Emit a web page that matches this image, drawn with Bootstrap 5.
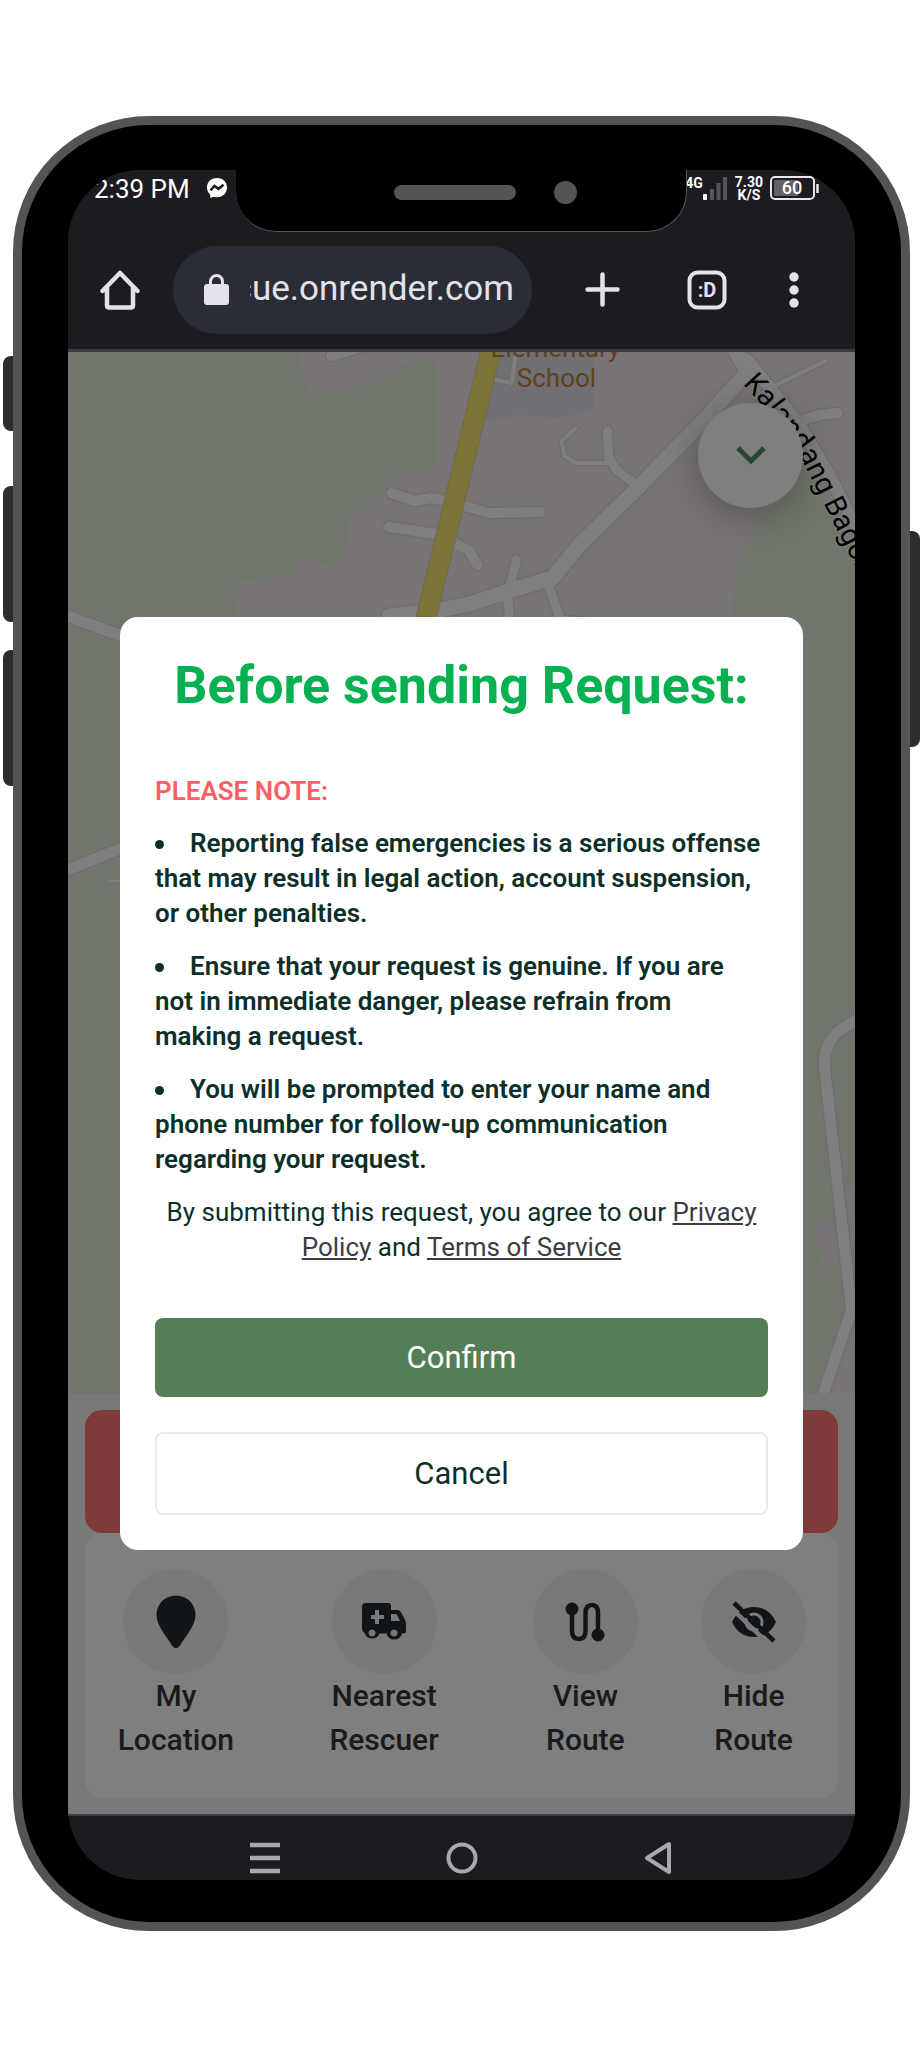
<!DOCTYPE html>
<html lang="en">
<head>
<meta charset="utf-8">
<meta name="viewport" content="width=device-width, initial-scale=1">
<title>Before sending Request</title>
<link href="https://cdn.jsdelivr.net/npm/bootstrap@5.3.0/dist/css/bootstrap.min.css" rel="stylesheet">
<style>
  body { font-family: Roboto, "Liberation Sans", sans-serif; background: #fff; }
  .stage { padding: 116px 11px 116px 13px; }
  .phone { background: #000; border: 9px solid #545454; border-radius: 136px; padding: 45px 46px 42px; }
  .side-key { width: 10px; background: #2d2d2d; left: -19px; border-radius: 8px 0 0 8px; }
  .key-mute { top: 231px; height: 75px; }
  .key-up { top: 361px; height: 136px; }
  .key-down { top: 525px; height: 136px; }
  .key-power { left: auto; right: -19px; top: 406px; height: 216px; border-radius: 0 8px 8px 0; }
  .screen { background: #1c1b20; border-radius: 72px; overflow: hidden; }
  .notch { top: 0; left: 50%; width: 451px; height: 62px; margin-left: -226px; background: #000; border-radius: 0 0 40px 40px; border: solid #55555a; border-width: 0 1px 1px 0; }
  .speaker { width: 122px; height: 15px; background: #545454; border-radius: 8px; margin-left: 158px; }
  .lens { width: 23px; height: 23px; background: #545454; border-radius: 50%; margin-left: 38px; }

  .status { height: 60px; padding: 6px 35px 0 26px; color: #fff; }
  .clock { font-size: 26px; line-height: 26px; }
  .net { font-size: 14px; line-height: 14px; font-weight: 700; }
  .rate { font-size: 14px; line-height: 13px; font-weight: 700; margin: 0 7px 0 8px; }
  .toolbar { height: 119px; padding: 0 56px 0 32px; color: #e3e2ea; }
  .tool { background: none; border: 0; padding: 0; color: inherit; line-height: 0; }
  .omnibox { background: #2b2d36; height: 88px; margin: 0 53px 0 33px; padding: 0 18px 0 31px; flex: 1 1 0; min-width: 0; }
  .omnibox input { background: none; border: 0; outline: 0; color: #e3e2ea; font-size: 35px; padding: 0; width: 0; min-width: 0; flex: 1 1 0; direction: rtl; margin-left: 21px; }
  .tab-gap { margin: 0 62px 0 67px; }

  .site { border-top: 3px solid #3c3b44; border-bottom: 2px solid #3c3b4c; }
  .map { display: block; width: 100%; height: 1041px; }
  .map .case { stroke: #e0dadd; }
  .map .road { stroke: #fefefe; }
  .toggle { top: 51px; right: 52px; width: 105px; height: 105px; background: #fff; box-shadow: 0 6px 40px rgba(0,0,0,.3); }
  .dock { background: #f2f2f2; padding: 17px 17px 16px; }
  .sos { display: block; height: 123px; background: #fe7676; border: 0; border-radius: 17px; }
  .actions { display: grid; grid-template-columns: 182fr 235fr 168fr 169fr; background: #fff; border-radius: 17px; padding: 36px 0; }
  .action { background: none; border: 0; padding: 0; font-size: 30px; line-height: 44px; font-weight: 500; color: #363636; }
  .disc { width: 105px; height: 105px; background: #f3f3f3; color: #242a30; }

  .dim { background: rgba(0,0,0,.5); padding: 0 52px; }
  .sheet { background: #fff; border-radius: 18px; padding: 35px; color: #0c3029; font-size: 26px; line-height: 35px; }
  .sheet h1 { font-size: 52px; line-height: 68px; font-weight: 700; color: #05b150; margin-bottom: 54px; }
  .note { color: #fb5f63; font-weight: 600; margin-bottom: 17px; }
  .rules li { font-weight: 600; margin-bottom: 18px; padding-right: 5px; }
  .rules li::before { content: ""; display: inline-block; width: 9px; height: 9px; border-radius: 50%; background: currentColor; margin-right: 26px; vertical-align: 3px; }
  .terms { margin-bottom: 53px; }
  .terms a { color: #3c3c3f; }
  .choice { font-size: 31px; border-radius: 8px; padding: 0; line-height: 39px; }
  .choice-ok { background: #557e57; color: #fff; border: 0; height: 79px; margin-bottom: 35px; }
  .choice-no { background: #fff; color: #0c3029; border: 2px solid #e9e9e9; height: 83px; }
  .navkeys { height: 64px; padding-top: 25px; color: #a9a8ad; }
</style>
</head>
<body>
<main class="stage">
  <div class="phone position-relative">
    <span class="side-key key-mute position-absolute"></span>
    <span class="side-key key-up position-absolute"></span>
    <span class="side-key key-down position-absolute"></span>
    <span class="side-key key-power position-absolute"></span>

    <div class="screen position-relative">
      <div class="status d-flex align-items-start">
        <span class="clock">2:39 PM</span>
        <svg class="ms-3" width="22" height="24" viewBox="0 0 22 24" aria-hidden="true"><path d="M11 2C5 2 1 6 1 11.600c0 3 1.300 5.400 3.300 7.100V22l3-1.300c1.200.4 2.400.6 3.700.6 6 0 10-4.300 10-9.700S17 2 11 2z" fill="#fff"/><path d="M4.500 14.500l4-4.500 4 2.800 5-4" fill="none" stroke="#1c1b20" stroke-width="2.600"/></svg>
        <div class="d-flex ms-auto">
          <span class="net">4G</span>
          <svg width="24" height="25" viewBox="0 0 24 25" aria-hidden="true"><rect y="18" width="4" height="6" rx="1" fill="#fff"/><path d="M9 24V13M15.500 24V7M22 24V1" stroke="#55545a" stroke-width="4"/></svg>
          <span class="rate text-center">7.30<br>K/S</span>
          <svg width="50" height="25" viewBox="0 0 50 25"><rect x="1" y="1" width="43" height="22" rx="4" fill="none" stroke="#e8e8ea" stroke-width="2"/><path d="M4 4h24v16H4z" fill="#626166"/><path d="M47.500 8v9" stroke="#e8e8ea" stroke-width="2.500"/><text x="22" y="18" text-anchor="middle" font-size="18" font-weight="500" fill="#fff">60</text></svg>
        </div>
      </div>

      <div class="notch position-absolute d-flex align-items-center">
        <span class="speaker mb-3"></span><span class="lens mb-3"></span>
      </div>

      <div class="toolbar d-flex align-items-center">
        <button class="tool" aria-label="Home"><svg width="40" height="42" viewBox="0 0 40 42" fill="none" stroke="currentColor" stroke-width="4.500" stroke-linejoin="round" stroke-linecap="round"><path d="M2.500 22L20 4l17.500 18M7 18v18.500q0 2 2 2h22q2 0 2-2V18"/></svg></button>
        <div class="omnibox d-flex align-items-center rounded-pill">
          <svg class="flex-shrink-0" width="25" height="32" viewBox="0 0 25 32" aria-hidden="true"><rect y="10" width="25" height="21" rx="3" fill="currentColor"/><path d="M6.500 12V7.500a6 6 0 0 1 12 0V12" fill="none" stroke="currentColor" stroke-width="3"/></svg>
          <input type="text" aria-label="Address" value="rescue.onrender.com">
        </div>
        <button class="tool" aria-label="New tab"><svg width="35" height="35" viewBox="0 0 35 35" stroke="currentColor" stroke-width="4.500" stroke-linecap="round"><path d="M17.500 2.500v30M2.500 17.500h30"/></svg></button>
        <button class="tool tab-gap" aria-label="Tabs"><svg width="40" height="40" viewBox="0 0 40 40"><rect x="2.500" y="2.500" width="35" height="35" rx="8" fill="none" stroke="currentColor" stroke-width="4"/><text x="20" y="27" text-anchor="middle" font-size="20" font-weight="700" fill="currentColor">:D</text></svg></button>
        <button class="tool" aria-label="Menu"><svg width="10" height="36" viewBox="0 0 10 36" fill="currentColor"><circle cx="5" cy="5" r="4.700"/><circle cx="5" cy="18" r="4.700"/><circle cx="5" cy="31" r="4.700"/></svg></button>
      </div>

      <div class="site position-relative">
        <svg class="map" viewBox="68 352 788 1041" preserveAspectRatio="xMidYMin slice" fill="none" stroke-linecap="round" stroke-linejoin="round">
          <path fill="#e1ecd9" d="M0 300h1000v1200H0z"/>
          <path fill="#f0e8ea" d="M298 340l5 35 6 17h34l50-18 6-10 38-6v112l-38 3-22 28-27 18-5 42-15 5-28-9-15 20-47 3-6 60h494l10-75 22-45 34-32 12-24 50 95V340z"/>
          <path fill="#f0e8ea" d="M819 1215l14 8 6 40-16 10-6-30zM842 1190l20-10v100z M850 1310l-25 90h40v-110z"/>
          <path fill="#dde0e8" d="M495 340h99v70l-34 8-40-3-40 8z"/>
          <g class="case">
            <path d="M332 356l40-12M392 493l23 8 17-3 15 3 43 12 51-1M389 527l48 7 32 16 9 15M800 421l20-6 18-2" stroke-width="13"/>
            <path d="M727 335l21 37-48 53-64 65-56 55-27 33-41 12-42 14-40 8-40 4" stroke-width="18"/>
            <path d="M748 360l52 65 30 50 40 80" stroke-width="15"/>
            <path d="M517 560l-9 35 3 35M549 585l12 35 32 3M608 431l1 26 8 13 20 15" stroke-width="12"/>
            <path d="M576 428l-14 13 3 15 11 7h32M770 388l56-27M516 357l-4 26-15-3" stroke-width="7"/>
            <path d="M60 613l70 26M60 873l70-28M870 1011l-32 21q-14 13-13 36l27 242-32 95" stroke-width="14"/>
            <path d="M109 881h30" stroke-width="6"/>
          </g>
          <g class="road">
            <path d="M332 356l40-12M392 493l23 8 17-3 15 3 43 12 51-1M389 527l48 7 32 16 9 15M800 421l20-6 18-2" stroke-width="10"/>
            <path d="M727 335l21 37-48 53-64 65-56 55-27 33-41 12-42 14-40 8-40 4" stroke-width="15"/>
            <path d="M748 360l52 65 30 50 40 80" stroke-width="12"/>
            <path d="M517 560l-9 35 3 35M549 585l12 35 32 3M608 431l1 26 8 13 20 15" stroke-width="9"/>
            <path d="M576 428l-14 13 3 15 11 7h32M770 388l56-27M516 357l-4 26-15-3" stroke-width="4"/>
            <path d="M60 613l70 26M60 873l70-28M870 1011l-32 21q-14 13-13 36l27 242-32 95" stroke-width="11"/>
            <path d="M109 881h30" stroke-width="3"/>
          </g>
          <path d="M494 340l-72 297" stroke="#d8cf9c" stroke-width="21"/>
          <path d="M494 340l-72 297" stroke="#fde66c" stroke-width="19"/>
          <g fill="#c4823c" font-size="26" text-anchor="middle"><text x="556" y="357">Elementary</text><text x="557" y="387">School</text></g>
          <path id="street" d="M743 384L768 411L796 447L866 587"/>
          <text fill="#000" font-size="29" stroke="#fff" stroke-width="2" paint-order="stroke"><textPath href="#street">Kalandang Bagong</textPath></text>
        </svg>
        <button class="toggle btn position-absolute rounded-circle p-0" aria-label="Collapse"><svg width="30" height="20" viewBox="0 0 30 20" fill="none" stroke="#54905f" stroke-width="5"><path d="M2 2l13 13L28 2"/></svg></button>

        <div class="dock">
          <button class="sos w-100" aria-label="Send request"></button>
          <div class="actions">
            <button class="action d-flex flex-column align-items-center"><span class="disc rounded-circle d-flex align-items-center justify-content-center"><svg width="40" height="54" viewBox="0 0 40 54" fill="currentColor"><path d="M20 .5C9 .5.500 8.800.500 20 .5 30 10 41 16.500 51q3.500 4.500 7 0C30 41 39.500 30 39.500 20 39.500 8.800 31 .5 20 .5z"/></svg></span>My<br>Location</button>
            <button class="action d-flex flex-column align-items-center"><span class="disc rounded-circle d-flex align-items-center justify-content-center"><svg width="44" height="38" viewBox="0 0 44 38"><path fill="currentColor" fill-rule="evenodd" d="M4 0h22q3 0 3 3v4h6q3 0 4.500 3l4 8q.5 1 .5 3v7q0 2.500-2.500 2.500H40a8 8 0 0 1-15.500 0h-7a8 8 0 0 1-15-.5Q0 28 0 26V4q0-4 4-4zM13 7v5H9v4h4v5h4v-5h5v-4h-5V7zM29 11v7h9l-3-6q-.5-1-2-1zM10 26.500a3.500 3.500 0 1 0 .1 0zM32 26.500a3.500 3.500 0 1 0 .1 0z"/></svg></span>Nearest<br>Rescuer</button>
            <button class="action d-flex flex-column align-items-center"><span class="disc rounded-circle d-flex align-items-center justify-content-center"><svg width="40" height="40" viewBox="0 0 40 40"><path d="M7 7v22q0 8 7 8 6.500 0 6.500-8V11q0-8 6.500-8 6 0 6 8v22" fill="none" stroke="currentColor" stroke-width="4.500"/><circle cx="7" cy="7" r="6.500" fill="currentColor"/><circle cx="33" cy="33" r="6.500" fill="currentColor"/></svg></span>View<br>Route</button>
            <button class="action d-flex flex-column align-items-center"><span class="disc rounded-circle d-flex align-items-center justify-content-center"><svg width="44" height="42" viewBox="0 0 44 42"><path d="M0 21Q7 6 22 6t22 15q-7 15-22 15T0 21z" fill="currentColor"/><circle cx="22" cy="21" r="8" fill="none" stroke="#f3f3f3" stroke-width="3"/><circle cx="23" cy="21" r="4" fill="currentColor"/><path d="M-3 5l41 39" stroke="#f3f3f3" stroke-width="4.500"/><path d="M2 2l40 38" stroke="currentColor" stroke-width="4.500"/></svg></span>Hide<br>Route</button>
          </div>
        </div>

        <div class="dim position-absolute top-0 start-0 w-100 h-100 d-flex align-items-center">
          <section class="sheet w-100" role="dialog" aria-labelledby="ask">
            <h1 id="ask" class="text-center">Before sending Request:</h1>
            <p class="note">PLEASE NOTE:</p>
            <ul class="rules list-unstyled mb-0">
              <li>Reporting false emergencies is a serious offense that may result in legal action, account suspension, or other penalties.</li>
              <li>Ensure that your request is genuine. If you are not in immediate danger, please refrain from making a request.</li>
              <li>You will be prompted to enter your name and phone number for follow-up communication regarding your request.</li>
            </ul>
            <p class="terms text-center">By submitting this request, you agree to our <a href="#">Privacy Policy</a> and <a href="#">Terms of Service</a></p>
            <button class="choice choice-ok btn d-block w-100">Confirm</button>
            <button class="choice choice-no btn d-block w-100">Cancel</button>
          </section>
        </div>
      </div>

      <div class="navkeys row justify-content-center gx-0 text-center">
        <div class="col-3"><button class="tool" aria-label="Recent apps"><svg width="30" height="34" viewBox="0 0 30 34" stroke="currentColor" stroke-width="4.500"><path d="M0 4h30M0 17h30M0 30h30"/></svg></button></div>
        <div class="col-3"><button class="tool" aria-label="Home screen"><svg width="32" height="34" viewBox="0 0 32 34" fill="none" stroke="currentColor" stroke-width="4"><circle cx="16" cy="17" r="13.500"/></svg></button></div>
        <div class="col-3"><button class="tool" aria-label="Back"><svg width="28" height="34" viewBox="0 0 28 34" fill="none" stroke="currentColor" stroke-width="4" stroke-linejoin="round"><path d="M25 3v28L3 17z"/></svg></button></div>
      </div>
    </div>
  </div>
</main>
<script src="https://cdn.jsdelivr.net/npm/bootstrap@5.3.0/dist/js/bootstrap.bundle.min.js"></script>
</body>
</html>
